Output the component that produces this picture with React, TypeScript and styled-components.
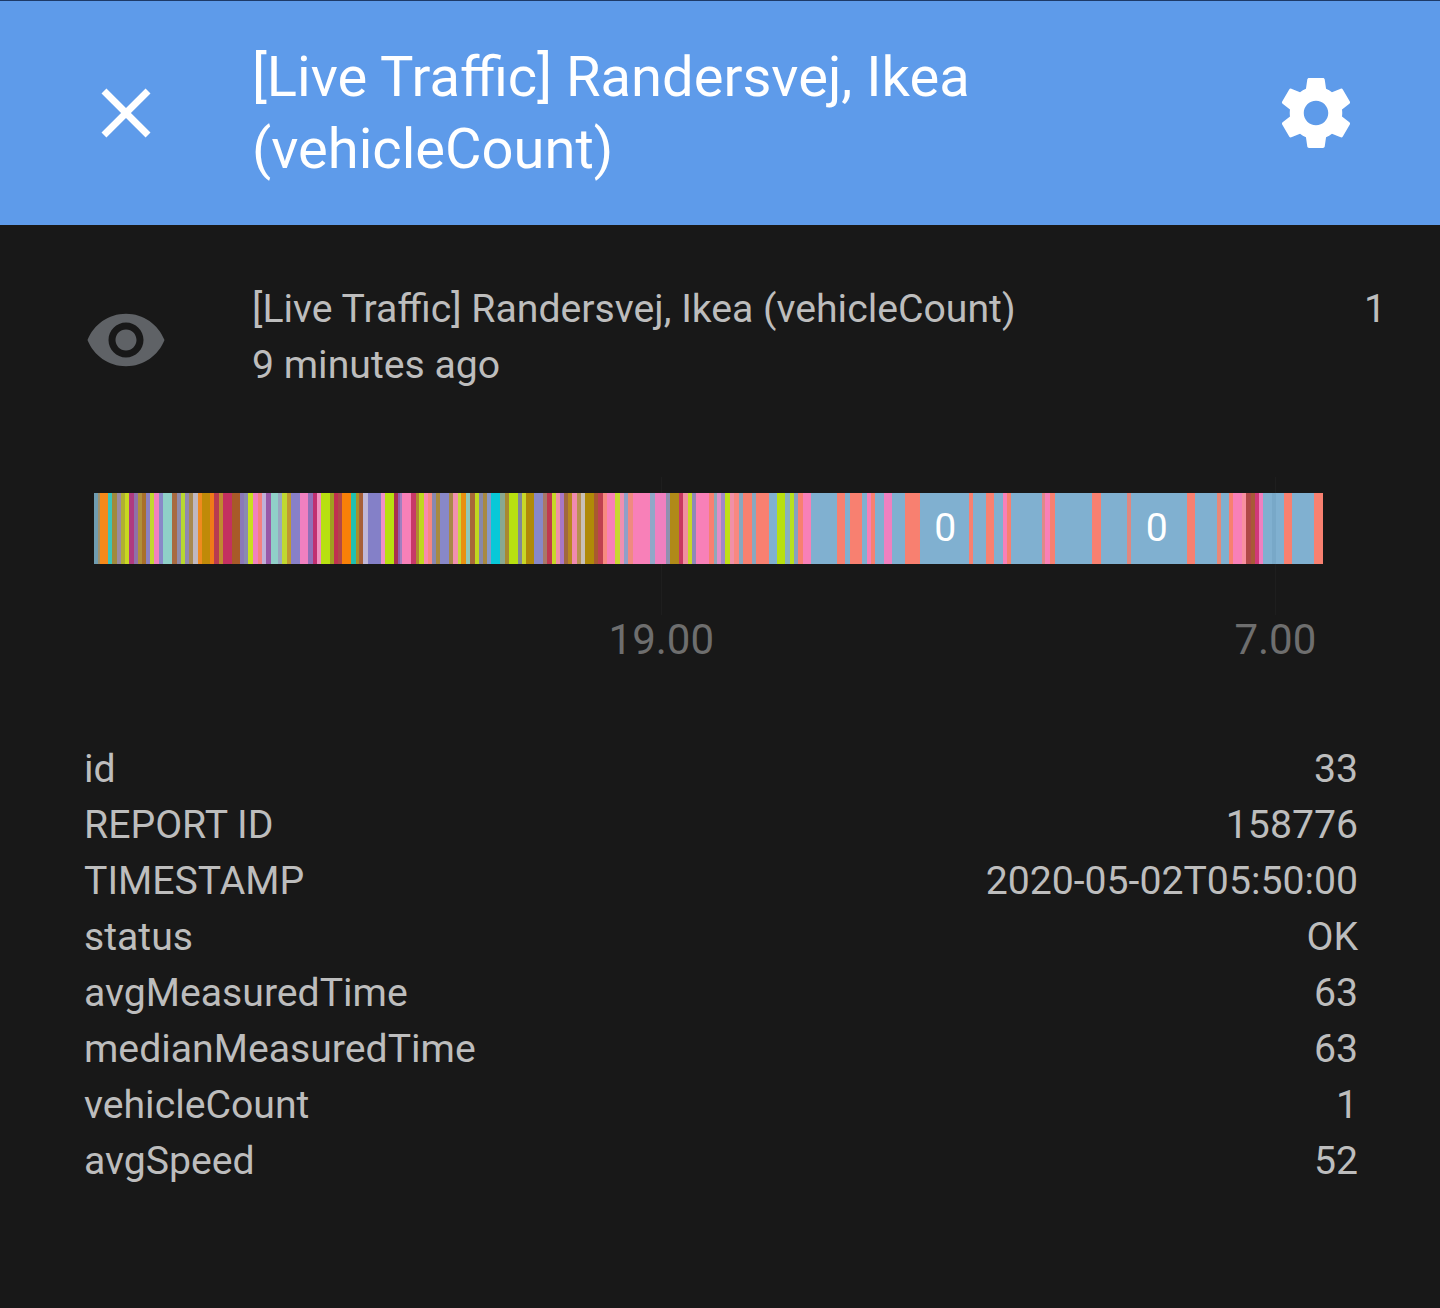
import styled, { createGlobalStyle } from 'styled-components'

const GlobalStyle = createGlobalStyle`
    html, body {
        margin: 0;
        padding: 0;
        background: #181818;
    }
    body {
        font-family: Roboto, "Liberation Sans", sans-serif;
    }
`

const Page = styled.div`
    width: 1440px;
    height: 1308px;
    overflow: hidden;
    background: #181818;
    color: #bdbdbd;
`

const Header = styled.header`
    display: grid;
    grid-template-columns: 84px 1fr 84px;
    column-gap: 84px;
    align-items: center;
    box-sizing: border-box;
    height: 225px;
    padding: 0 82px 0 84px;
    background: #5e9bea;
    border-top: 1px solid #1d3a68;
    color: #fff;
`

const Title = styled.h1`
    margin: 0;
    width: 800px;
    font-size: 56.1px;
    font-weight: 400;
    line-height: 72px;
`

const Icon = styled.svg<{ $color?: string }>`
    display: block;
    width: 84px;
    height: 84px;
    fill: ${(p) => p.$color || '#fff'};
`

const EyeIcon = styled(Icon)`
    margin-top: 6px;
`

const Item = styled.section`
    display: grid;
    grid-template-columns: 84px 1fr auto;
    column-gap: 84px;
    align-items: center;
    padding: 56px 54px 0 84px;
    font-size: 39.2px;
    line-height: 56px;
`

const Count = styled.div`
    align-self: start;
`

const Chart = styled.div`
    position: relative;
    margin: 100px 0 0 94.33px;
    width: 1229px;
    height: 180px;
`

const Bar = styled.div`
    position: relative;
    display: flex;
    height: 71px;
`

const Segment = styled.div<{ $left?: number; $right?: number }>`
    display: flex;
    flex: none;
    align-items: center;
    justify-content: center;
    box-sizing: border-box;
    padding: 0 ${(p) => p.$right || 0}px 2px ${(p) => p.$left || 0}px;
    color: #fff;
    font-size: 39.2px;
`

const Tick = styled.div`
    position: absolute;
    top: -16px;
    width: 1px;
    height: 138px;
    background: #1e1e1e;
`

const AxisLabel = styled.div`
    position: absolute;
    top: 121px;
    transform: translateX(-50%);
    color: #6e6e6e;
    font-size: 42px;
    line-height: 52px;
`

const Details = styled.dl`
    margin: 68px 82px 0 84px;
    font-size: 39.2px;
    line-height: 56px;
`

const Row = styled.div`
    display: flex;
    justify-content: space-between;
`

const Key = styled.dt`
    margin: 0;
`

const Value = styled.dd`
    margin: 0;
`

type Stop = [number, string]

const BLUE = '#80b0d0'
const SALMON = '#f88070'
const PINK = '#f880b8'

const zone1: Stop[] = [
    [40, '#6f9cb0'], [46, '#a0906a'], [68, '#f5891a'], [82, '#3cc4b8'], [95, '#a08a3c'], [108, '#9a8aa0'],
    [120, '#b0b030'], [133, '#c8d820'], [147, '#b03a80'], [160, '#9070a8'], [172, '#b0903a'], [184, '#a8702a'],
    [196, '#8a80c0'], [208, '#c0d830'], [222, '#f080c0'], [235, '#8888c8'], [262, '#8fd0c8'], [275, '#a86a40'],
    [287, '#908aa8'], [300, '#b8d830'], [312, '#9088b0'], [324, '#a88a50'], [338, '#c0b8c0'], [350, '#f08a20'],
    [375, '#c08a08'], [387, '#f07a18'], [401, '#b83a50'], [414, '#c08a30'], [440, '#c43060'], [466, '#a85a28'],
    [478, '#8a78b8'], [490, '#8a8ab0'], [505, '#c8e020'], [518, '#f080c0'], [530, '#f58080'], [543, '#c0b0d8'],
    [557, '#9858a8'], [580, '#90d0c8'], [592, '#98a8c0'], [607, '#c0d830'], [619, '#c09830'], [645, '#8880c8'],
    [670, '#f080c0'], [684, '#9070b8'], [697, '#c03070'], [709, '#f090c0'], [735, '#b8e010'], [747, '#a0a020'],
    [760, '#c03050'], [773, '#b04848'], [800, '#f88008'], [813, '#20c0b0'], [824, '#a89028'], [836, '#a86038'],
    [851, '#c0b8d8'], [888, '#8480c8'], [902, '#f090c8'], [928, '#b8e010'], [941, '#a83050'], [945, '#9060b0'],
]

const zone2: Stop[] = [
    [8, '#a080c0'], [33, PINK], [48, '#c83868'], [58, '#b08a30'], [72, '#c0d820'], [85, '#f88ab0'],
    [97, '#f88880'], [110, '#8888b0'], [122, '#a88a40'], [148, '#8888c8'], [160, '#a88848'], [175, '#f090b0'],
    [185, '#c8d838'], [198, '#e89010'], [212, '#90c8b8'], [227, '#a86838'], [238, '#c0d820'], [250, '#8888a8'],
    [263, '#a88a40'], [275, '#8898c8'], [302, '#08c8d8'], [315, '#88a890'], [328, '#a88830'], [354, '#b8e010'],
    [367, '#808898'], [378, '#c8d828'], [404, '#b08a08'], [430, '#8888c8'], [443, '#a87868'], [456, '#c03850'],
    [468, '#c8d828'], [481, '#f090a8'], [494, '#a878c8'], [506, '#a06840'], [518, '#b88820'], [531, '#f08ab0'],
    [544, '#b89050'], [556, '#c8c0b8'], [583, '#b08a08'], [595, '#a85a30'], [610, '#c04050'], [622, '#f88a80'],
    [647, PINK], [660, '#c8d830'], [673, '#f090b0'], [686, '#90a0c8'], [700, '#f08a80'], [752, PINK],
    [765, '#90a8c8'], [800, '#f080c0'], [812, '#9090b0'], [838, '#b08a18'], [852, '#c83860'], [865, '#f090a0'],
    [878, '#c8d828'], [890, '#9088b8'], [930, PINK],
]

const zone3: Stop[] = [
    [13, SALMON], [23, '#90a8b8'], [36, '#e090c8'], [48, '#a088c8'], [62, '#c0e018'], [75, '#f090a8'],
    [88, '#f88880'], [100, '#88a8c0'], [127, SALMON], [140, '#88a8c0'], [178, SALMON], [203, BLUE],
    [228, '#b8e010'], [242, '#88b0c0'], [254, '#b8e020'], [267, '#88a0c0'], [280, SALMON], [304, PINK],
    [383, BLUE], [408, SALMON], [422, BLUE], [458, SALMON], [472, BLUE], [484, PINK], [497, SALMON],
    [523, BLUE], [548, '#f080c0'], [586, BLUE], [632, SALMON], [778, BLUE], [792, SALMON], [829, BLUE],
    [855, SALMON], [880, BLUE], [892, PINK], [906, SALMON], [930, BLUE],
]

const zone4: Stop[] = [
    [67, BLUE], [78, '#e08888'], [92, PINK], [106, SALMON], [217, BLUE], [246, SALMON], [322, BLUE],
    [335, '#e08880'], [502, BLUE], [527, SALMON], [592, BLUE], [605, '#e88878'], [628, BLUE], [641, SALMON],
    [668, PINK], [682, '#f890a0'], [695, '#b04848'], [708, '#a85a38'], [720, '#d03878'], [733, '#f080c0'],
    [758, BLUE], [770, '#78a8c8'], [795, BLUE], [820, SALMON], [886, BLUE], [912, SALMON],
]

// stops are read off 3x crops, so x is in thirds of a pixel from each crop's left edge
const toStops = (left: number, stops: Stop[]): Stop[] =>
    stops.map(([x, color]) => [left + x / 3, color])

const barLeft = 94.33
const allStops = [
    ...toStops(85, zone1),
    ...toStops(400, zone2),
    ...toStops(710, zone3),
    ...toStops(1020, zone4),
]

const segments = allStops.map(([end, color], i) => {
    const start = i === 0 ? barLeft : allStops[i - 1][0]
    return { start, width: end - start, color }
})

const rows = [
    ['id', '33'],
    ['REPORT ID', '158776'],
    ['TIMESTAMP', '2020-05-02T05:50:00'],
    ['status', 'OK'],
    ['avgMeasuredTime', '63'],
    ['medianMeasuredTime', '63'],
    ['vehicleCount', '1'],
    ['avgSpeed', '52'],
]

function labelFor(start: number, width: number) {
    if (width < 40) return null
    if (Math.abs(start - 920.7) < 1) return { text: '0', left: 2, right: 0 }
    if (Math.abs(start - 1131.7) < 1) return { text: '0', left: 0, right: 4 }
    return null
}

function App() {
    return (
        <Page>
            <GlobalStyle />
            <Header>
                <Icon viewBox='0 0 24 24'>
                    <path d='M19 6.41L17.59 5 12 10.59 6.41 5 5 6.41 10.59 12 5 17.59 6.41 19 12 13.41 17.59 19 19 17.59 13.41 12z' />
                </Icon>
                <Title>[Live Traffic] Randersvej, Ikea (vehicleCount)</Title>
                <Icon viewBox='0 0 24 24'>
                    <path d='M19.43 12.98c.04-.32.07-.64.07-.98s-.03-.66-.07-.98l2.11-1.65c.19-.15.24-.42.12-.64l-2-3.46c-.12-.22-.39-.3-.61-.22l-2.49 1c-.52-.4-1.08-.73-1.69-.98l-.38-2.65C14.46 2.18 14.25 2 14 2h-4c-.25 0-.46.18-.49.42l-.38 2.65c-.61.25-1.17.59-1.69.98l-2.49-1c-.23-.09-.49 0-.61.22l-2 3.46c-.13.22-.07.49.12.64l2.11 1.65c-.04.32-.07.65-.07.98s.03.66.07.98l-2.11 1.65c-.19.15-.24.42-.12.64l2 3.46c.12.22.39.3.61.22l2.49-1c.52.4 1.08.73 1.69.98l.38 2.65c.03.24.24.42.49.42h4c.25 0 .46-.18.49-.42l.38-2.65c.61-.25 1.17-.59 1.69-.98l2.49 1c.23.09.49 0 .61-.22l2-3.46c.12-.22.07-.49-.12-.64l-2.11-1.65zM12 15.5c-1.93 0-3.5-1.57-3.5-3.5s1.57-3.5 3.5-3.5 3.5 1.57 3.5 3.5-1.57 3.5-3.5 3.5z' />
                </Icon>
            </Header>

            <Item>
                <EyeIcon viewBox='0 0 24 24' $color='#5f6266'>
                    <path d='M12 4.5C7 4.5 2.73 7.61 1 12c1.73 4.39 6 7.5 11 7.5s9.27-3.11 11-7.5c-1.73-4.39-6-7.5-11-7.5zM12 17c-2.76 0-5-2.24-5-5s2.24-5 5-5 5 2.24 5 5-2.24 5-5 5zm0-8c-1.66 0-3 1.34-3 3s1.34 3 3 3 3-1.34 3-3-1.34-3-3-3z' />
                </EyeIcon>
                <div>
                    <div>[Live Traffic] Randersvej, Ikea (vehicleCount)</div>
                    <div>9 minutes ago</div>
                </div>
                <Count>1</Count>
            </Item>

            <Chart>
                <Tick style={{ left: 567 }} />
                <Tick style={{ left: 1181 }} />
                <Bar>
                    {segments.map(({ start, width, color }) => {
                        const label = labelFor(start, width)
                        return (
                            <Segment
                                key={start}
                                $left={label?.left}
                                $right={label?.right}
                                style={{ width, background: color }}
                            >
                                {label?.text}
                            </Segment>
                        )
                    })}
                </Bar>
                <AxisLabel style={{ left: 567 }}>19.00</AxisLabel>
                <AxisLabel style={{ left: 1181 }}>7.00</AxisLabel>
            </Chart>

            <Details>
                {rows.map(([key, value]) => (
                    <Row key={key}>
                        <Key>{key}</Key>
                        <Value>{value}</Value>
                    </Row>
                ))}
            </Details>
        </Page>
    )
}

export default App
